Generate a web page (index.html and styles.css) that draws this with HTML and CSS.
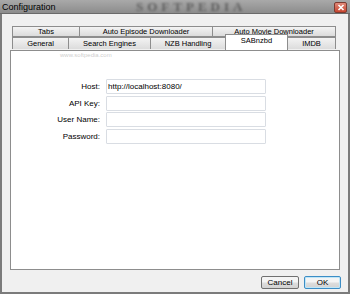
FILE: index.html
```html
<!DOCTYPE html>
<html>
<head>
    <title>Configuration</title>
    <link rel="stylesheet" href="styles.css">
</head>
<body>
    <div class="window">
        <div class="titlebar">
            <span class="title">Configuration</span>
            <span class="watermark">SOFTPEDIA</span>
            <div class="close">
                <svg width="8" height="7" viewBox="0 0 8 7"><path d="M1.5 1 L6.5 6 M6.5 1 L1.5 6" stroke="#fff" stroke-width="1.6"/></svg>
            </div>
        </div>
        <div class="client">
            <div class="tabs">
                <div class="tab-row back">
                    <div class="tab" style="width: 67px">Tabs</div>
                    <div class="tab" style="width: 133px">Auto Episode Downloader</div>
                    <div class="tab" style="width: 124px">Auto Movie Downloader</div>
                </div>
                <div class="tab-row front">
                    <div class="tab" style="width: 56px">General</div>
                    <div class="tab" style="width: 82px">Search Engines</div>
                    <div class="tab" style="width: 75px">NZB Handling</div>
                    <div class="tab selected" style="width: 63px">SABnzbd</div>
                    <div class="tab" style="width: 48px">IMDB</div>
                </div>
                <span class="faint-mark">www.softpedia.com</span>
            </div>
            <div class="panel">
                <div class="form">
                    <label>Host:</label>
                    <div class="field">http://localhost:8080/</div>
                    <label>API Key:</label>
                    <div class="field"></div>
                    <label>User Name:</label>
                    <div class="field"></div>
                    <label>Password:</label>
                    <div class="field"></div>
                </div>
            </div>
            <div class="buttons">
                <button class="btn">Cancel</button>
                <button class="btn default">OK</button>
            </div>
        </div>
    </div>
</body>
</html>
```

FILE: styles.css
```css
body {
    margin: 0;
    padding: 0;
    font-family: "Liberation Sans", Arial, sans-serif;
    background: #ffffff;
}
.window {
    width: 346px;
    height: 292px;
    border: 2px solid #7b7b7b;
    border-top: none;
    background: #f0f0f0;
    display: flex;
    flex-direction: column;
    position: relative;
}
.titlebar {
    height: 13px;
    margin: 0 -2px;
    background: linear-gradient(#a9a9a9, #8c8c8c);
    border-bottom: 1px solid #6a6a6a;
    display: flex;
    align-items: center;
    position: relative;
}
.title {
    font-size: 9px;
    color: #000;
    padding-left: 2px;
}
.watermark {
    position: absolute;
    left: 136px;
    top: 1px;
    line-height: 12px;
    font-family: "Liberation Serif", serif;
    font-size: 13px;
    font-weight: bold;
    letter-spacing: 4px;
    color: rgba(40, 40, 40, 0.5);
    filter: blur(0.8px);
}
.close {
    position: absolute;
    right: 3px;
    top: 2px;
    width: 11px;
    height: 9px;
    background: linear-gradient(#e08a7a, #c8452f);
    border: 1px solid #7d3a30;
    border-radius: 2px;
    display: flex;
    align-items: center;
    justify-content: center;
}
.client {
    flex: 1;
    padding: 12px 8px 0 8px;
    display: flex;
    flex-direction: column;
}
.tabs {
    padding: 0 2px;
    position: relative;
}
.tab-row {
    display: flex;
}
.tab {
    box-sizing: border-box;
    height: 12px;
    font-size: 7.5px;
    line-height: 11px;
    text-align: center;
    color: #000;
    background: linear-gradient(#f3f3f3, #dcdcdc);
    border: 1px solid #8d8d8d;
    border-right: none;
    white-space: nowrap;
}
.tab:last-child {
    border-right: 1px solid #8d8d8d;
}
.back .tab {
    height: 11px;
    line-height: 10px;
}
.front .tab {
    border-bottom: none;
}
.tab.selected {
    background: #ffffff;
    height: 16px;
    margin-top: -3px;
    line-height: 12px;
    position: relative;
    z-index: 2;
    border-right: 1px solid #8d8d8d;
}
.tab.selected + .tab {
    border-left: none;
}
.faint-mark {
    position: absolute;
    left: 50px;
    top: 26px;
    font-size: 6px;
    color: rgba(170, 170, 170, 0.6);
    z-index: 3;
}
.panel {
    height: 218px;
    background: #ffffff;
    border: 1px solid #8d8d8d;
    position: relative;
    z-index: 1;
}
.form {
    display: grid;
    grid-template-columns: 89px 160px;
    column-gap: 6px;
    row-gap: 1.5px;
    padding-top: 28px;
    align-items: center;
}
.form label {
    font-size: 8px;
    text-align: right;
    color: #000;
}
.field {
    box-sizing: border-box;
    height: 15px;
    border: 1px solid #d9dde3;
    border-radius: 1px;
    font-size: 8px;
    line-height: 13px;
    padding-left: 1px;
    color: #000;
}
.buttons {
    display: flex;
    justify-content: flex-end;
    gap: 5px;
    margin-top: 6px;
    margin-right: -1px;
}
.btn {
    box-sizing: border-box;
    width: 38px;
    height: 13px;
    padding: 0;
    font-family: "Liberation Sans", Arial, sans-serif;
    font-size: 8px;
    color: #000;
    background: linear-gradient(#f4f4f4 45%, #dddddd 55%, #d2d2d2);
    border: 1px solid #707070;
    border-radius: 2px;
}
.btn.default {
    width: 37px;
    border-color: #3c8dc5;
    box-shadow: inset 0 0 0 1px #bfe6f8;
}
```
